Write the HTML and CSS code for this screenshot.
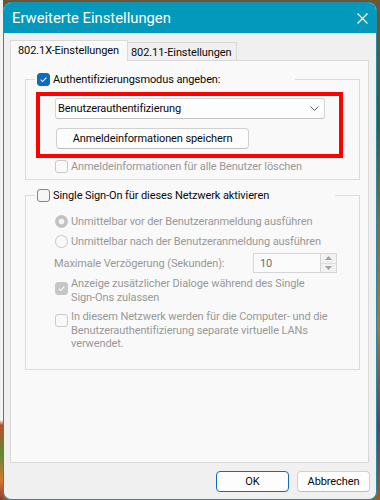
FILE: index.html
```html
<!DOCTYPE html>
<html lang="de">
<head>
<meta charset="utf-8">
<title>Erweiterte Einstellungen</title>
<link rel="stylesheet" href="styles.css">
</head>
<body>
<div class="window">
  <div class="titlebar">
    <span class="title">Erweiterte Einstellungen</span>
    <svg class="close" width="11" height="11" viewBox="0 0 11 11"><path d="M0.5 0.5 L10.5 10.5 M10.5 0.5 L0.5 10.5" stroke="#ffffff" stroke-width="1.1" fill="none"/></svg>
  </div>
  <div class="client">
    <div class="tabs">
      <div class="tab active">802.1X-Einstellungen</div>
      <div class="tab inactive">802.11-Einstellungen</div>
    </div>
    <div class="panel">
      <div class="group g1">
        <div class="legend l1">
          <span class="cb checked"><svg width="13" height="13" viewBox="0 0 13 13"><path d="M3.2 6.6 L5.5 8.9 L9.9 4.3" stroke="#ffffff" stroke-width="1.2" fill="none"/></svg></span>
          <span class="text">Authentifizierungsmodus angeben:</span>
        </div>
        <div class="highlight">
          <div class="select">
            <span>Benutzerauthentifizierung</span>
            <svg width="9" height="5" viewBox="0 0 9 5"><path d="M0.5 0.5 L4.5 4.5 L8.5 0.5" stroke="#5c5c5c" stroke-width="1" fill="none"/></svg>
          </div>
          <div class="button">Anmeldeinformationen speichern</div>
        </div>
        <div class="row sub disabled">
          <span class="cb off"></span>
          <span class="text">Anmeldeinformationen für alle Benutzer löschen</span>
        </div>
      </div>

      <div class="group g2">
        <div class="legend l2">
          <span class="cb"></span>
          <span class="text">Single Sign-On für dieses Netzwerk aktivieren</span>
        </div>
        <div class="row sub disabled r1">
          <span class="radio on"></span>
          <span class="text">Unmittelbar vor der Benutzeranmeldung ausführen</span>
        </div>
        <div class="row sub disabled r2">
          <span class="radio"></span>
          <span class="text">Unmittelbar nach der Benutzeranmeldung ausführen</span>
        </div>
        <div class="delay disabled">
          <span class="delay-label">Maximale Verzögerung (Sekunden):</span>
          <div class="spin">
            <span class="spin-value">10</span>
            <div class="spin-buttons">
              <span class="spin-btn"><svg width="7" height="4" viewBox="0 0 7 4"><path d="M0 4 L3.5 0 L7 4 Z" fill="#a3a3a3"/></svg></span>
              <span class="spin-btn"><svg width="7" height="4" viewBox="0 0 7 4"><path d="M0 0 L3.5 4 L7 0 Z" fill="#a3a3a3"/></svg></span>
            </div>
          </div>
        </div>
        <div class="multi sub disabled m1">
          <span class="cb checked-off"><svg width="13" height="13" viewBox="0 0 13 13"><path d="M3.2 6.6 L5.5 8.9 L9.9 4.3" stroke="#ffffff" stroke-width="1.2" fill="none"/></svg></span>
          <span class="text">Anzeige zusätzlicher Dialoge während des Single <span class="nowrap">Sign-Ons</span> zulassen</span>
        </div>
        <div class="multi sub disabled m2">
          <span class="cb off"></span>
          <span class="text">In diesem Netzwerk werden für die Computer- und die Benutzerauthentifizierung separate virtuelle LANs verwendet.</span>
        </div>
      </div>
    </div>
    <div class="actions">
      <div class="btn primary">OK</div>
      <div class="btn">Abbrechen</div>
    </div>
  </div>
</div>
</body>
</html>
```
FILE: styles.css
```css
* { box-sizing: border-box; }

html, body {
  margin: 0;
  height: 100%;
}

body {
  font-family: Roboto, "Open Sans", sans-serif;
  font-size: 11px;
  letter-spacing: -0.1px;
  color: #0a0a0a;
  overflow: hidden;
  background:
    linear-gradient(to bottom, #f3f3f3 0, #f3f3f3 420px, #b4502c 425px, #5f8a34 455px, #d7782a 480px, #8a3a3a 500px) 0 0 / 3px 100% no-repeat,
    linear-gradient(to bottom, #6b5634 0, #3f5e33 25%, #8e6a3a 45%, #b9702e 65%, #6b3f52 85%, #9b5a2c 100%);
}

.window {
  margin: 2px 0 0 3px;
  width: 374px;
  height: 498px;
  border: 1px solid #1d8fad;
  border-radius: 8px;
  background: #f0f0f0;
  display: flex;
  flex-direction: column;
  overflow: hidden;
}

.titlebar {
  height: 30px;
  flex: none;
  background: #0399bc;
  display: flex;
  align-items: center;
  justify-content: space-between;
  padding: 0 8px 0 8px;
}

.title {
  color: #ffffff;
  font-size: 14.8px;
  letter-spacing: 0;
  line-height: 30px;
}

.close {
  display: block;
}

.client {
  flex: 1;
  display: flex;
  flex-direction: column;
  padding: 7px 6px 7px 6px;
}

.tabs {
  display: flex;
  align-items: flex-end;
  height: 20px;
  position: relative;
  z-index: 1;
}

.tab {
  border: 1px solid #d9d9d9;
  border-bottom: none;
  white-space: nowrap;
  line-height: 16px;
}

.tab.active {
  width: 118px;
  height: 21px;
  margin-bottom: -1px;
  background: #f9f9f9;
  padding: 2px 0 0 7px;
}

.tab.inactive {
  width: 109px;
  height: 18px;
  border-left: none;
  background: #f0f0f0;
  padding: 2px 0 0 3px;
}

.panel {
  flex: 1;
  border: 1px solid #d9d9d9;
  background: #f9f9f9;
  margin-right: 1px;
  display: flex;
  flex-direction: column;
}

.group {
  border: 1px solid #dcdcdc;
  margin: 0 8px 0 14px;
}

.g1 {
  margin-top: 18px;
  padding-bottom: 6px;
}

.g2 {
  margin-top: 15px;
  padding-bottom: 18px;
}

.legend {
  display: flex;
  align-items: center;
  height: 13px;
  margin: -7px 0 0 9px;
  padding: 0 2px;
  background: #f9f9f9;
  white-space: nowrap;
}

.l1 { width: 260px; }
.l2 { width: 300px; }

.text {
  line-height: 13.5px;
}

.nowrap {
  white-space: nowrap;
}

.cb {
  flex: none;
  width: 13px;
  height: 13px;
  border-radius: 3px;
  border: 1px solid #858585;
  background: #f6f6f6;
  margin-right: 3px;
  display: flex;
  align-items: center;
  justify-content: center;
}

.cb svg { display: block; }

.cb.checked {
  background: #0f6cbd;
  border-color: #0f6cbd;
}

.cb.off {
  border-color: #c9c9c9;
  background: #f9f9f9;
}

.cb.checked-off {
  background: #c6c6c6;
  border-color: #c6c6c6;
}

.highlight {
  margin: 6px 0 0 10px;
  width: 307px;
  border: 4px solid #ff0000;
  padding: 2px 0 5px 15px;
}

.select {
  width: 270px;
  height: 21px;
  border: 1px solid #d4d4d4;
  border-bottom-color: #c2c2c2;
  border-radius: 3px;
  background: #fdfdfd;
  display: flex;
  align-items: center;
  justify-content: space-between;
  padding: 0 5px 0 2px;
}

.select svg { display: block; }

.button {
  margin: 9px 0 0 1px;
  width: 193px;
  height: 21px;
  border: 1px solid #d0d0d0;
  border-bottom-color: #bfbfbf;
  border-radius: 4px;
  background: #fdfdfd;
  display: flex;
  align-items: center;
  justify-content: center;
}

.row {
  display: flex;
  align-items: center;
  height: 13px;
  white-space: nowrap;
}

.sub {
  margin-left: 29px;
}

.g1 .row {
  margin-top: 2px;
}

.disabled {
  color: #989898;
}

.radio {
  flex: none;
  width: 13px;
  height: 13px;
  border-radius: 50%;
  border: 1px solid #c4c4c4;
  background: #f9f9f9;
  margin-right: 3px;
}

.radio.on {
  border-color: #c2c2c2;
  background: radial-gradient(circle, #f3f3f3 0, #f3f3f3 2.6px, #c2c2c2 3.2px);
}

.r1 { margin-top: 13px; }
.r2 { margin-top: 7px; }

.delay {
  display: flex;
  align-items: center;
  margin: 5px 0 0 28px;
}

.delay-label {
  width: 199px;
  white-space: nowrap;
}

.spin {
  width: 84px;
  height: 20px;
  border: 1px solid #d6d6d6;
  background: #fbfbfb;
  display: flex;
  align-items: stretch;
}

.spin-value {
  flex: 1;
  color: #6e6e6e;
  padding-left: 6px;
  display: flex;
  align-items: center;
}

.spin-buttons {
  width: 16px;
  display: flex;
  flex-direction: column;
  border-left: 1px solid #d6d6d6;
}

.spin-btn {
  flex: 1;
  display: flex;
  align-items: center;
  justify-content: center;
  background: #f1f1f1;
}

.spin-btn + .spin-btn {
  border-top: 1px solid #dedede;
}

.spin-btn svg { display: block; }

.multi {
  display: flex;
  align-items: flex-start;
}

.multi .text {
  width: 268px;
}

.multi .cb {
  margin-top: 5px;
}

.m1 { margin-top: 4px; }
.m2 { margin-top: 6px; }
.m2 .cb { margin-top: 4px; }

.actions {
  display: flex;
  justify-content: flex-end;
  gap: 8px;
  margin-top: 8px;
  height: 21px;
  flex: none;
}

.btn {
  width: 73px;
  height: 21px;
  border: 1px solid #d0d0d0;
  border-bottom-color: #bdbdbd;
  border-radius: 4px;
  background: #fdfdfd;
  display: flex;
  align-items: center;
  justify-content: center;
}

.btn.primary {
  border: 1px solid #0f6cbd;
}
```
